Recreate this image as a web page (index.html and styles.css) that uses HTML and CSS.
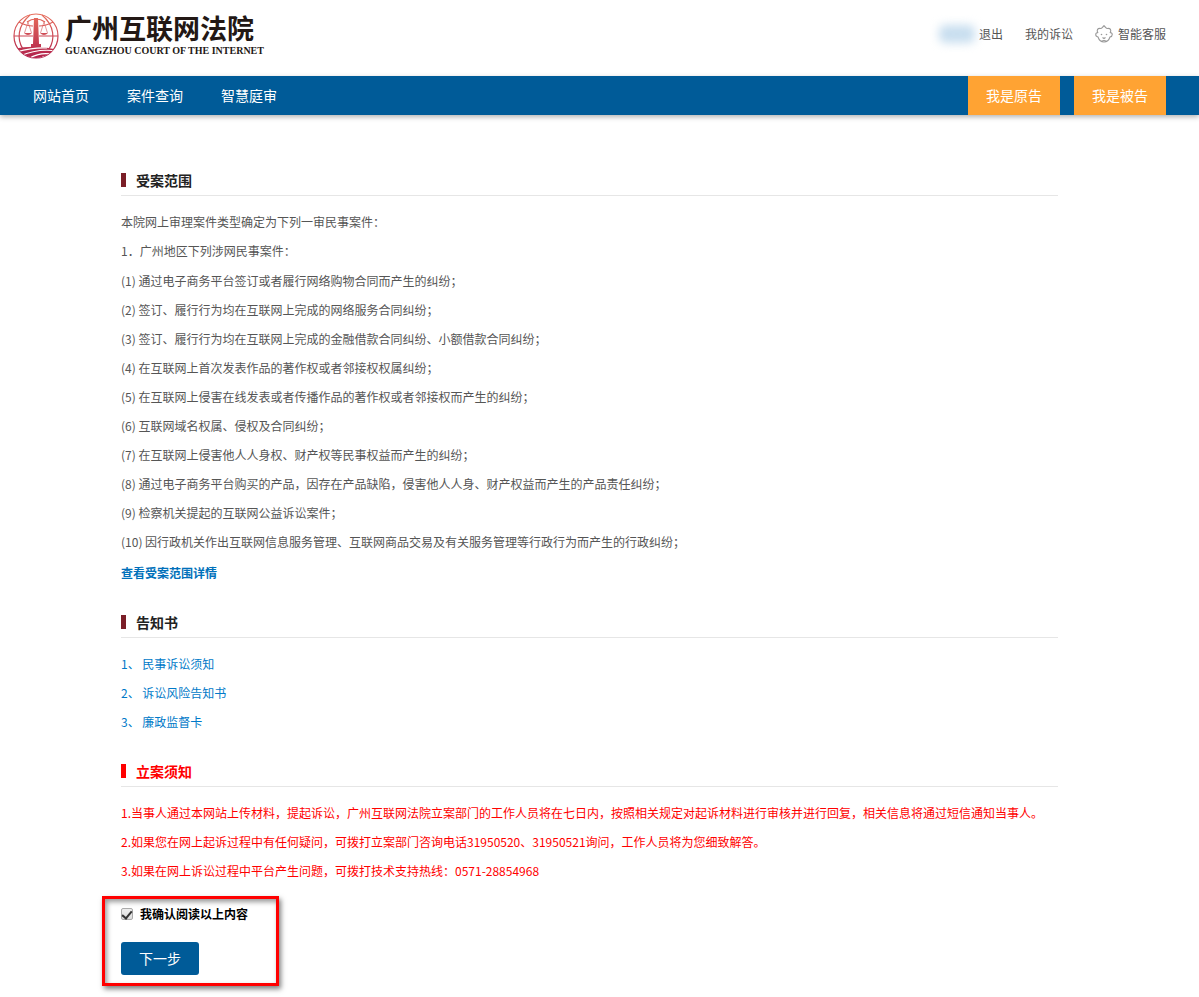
FILE: index.html
```
<!DOCTYPE html>
<html lang="zh-CN">
<head>
  <meta charset="UTF-8">
  <meta name="viewport" content="width=device-width, initial-scale=1.0">
  <title>广州互联网法院</title>
  <link rel="stylesheet" href="styles.css">
</head>
<body>
  <header class="header">
    <a class="logo" href="#">
      <svg class="logo-mark" viewBox="0 0 46 46" aria-hidden="true">
        <defs>
          <linearGradient id="red" x1="0" y1="0" x2="0" y2="46" gradientUnits="userSpaceOnUse">
            <stop offset="0" stop-color="#e8705c"/>
            <stop offset="1" stop-color="#b01f4b"/>
          </linearGradient>
          <clipPath id="globe"><circle cx="23" cy="23" r="22"/></clipPath>
        </defs>
        <g fill="none" stroke="url(#red)" stroke-width="1.2">
          <circle cx="23" cy="23" r="22"/>
          <path d="M17 2C4 13 4 27 10 36M29 2C42 13 42 27 36 36"/>
          <path d="M1 23H20M26 23H45M6 9Q13 13 20 13M40 9Q33 13 26 13"/>
          <path d="M14 9Q18 6 23 6Q28 6 32 9"/>
          <path d="M15 9L11.5 20M15 9L18.5 20M31 9L27.5 20M31 9L34.5 20" stroke-width=".6"/>
        </g>
        <g fill="url(#red)">
          <path d="M11 20H19Q15 24 11 20ZM27 20H35Q31 24 27 20Z"/>
          <path d="M21 5H25L26 31H28V35H18V31H20Z"/>
          <path clip-path="url(#globe)" d="M0 36Q22 31 46 37V46H0Z"/>
        </g>
        <g clip-path="url(#globe)" fill="none" stroke="#fff" stroke-width="1.1">
          <path d="M3 39Q22 34 34 35M7 43Q25 35 44 38M15 46Q28 38 42 42M26 46Q32 42 38 44"/>
        </g>
      </svg>
      <span class="logo-text">
        <span class="logo-cn">广州互联网法院</span>
        <span class="logo-en">GUANGZHOU COURT OF THE INTERNET</span>
      </span>
    </a>
    <div class="user-menu">
      <span class="user-name"></span>
      <a class="logout" href="#">退出</a>
      <a href="#">我的诉讼</a>
      <a class="service" href="#">
        <svg class="service-icon" viewBox="0 0 18 18" aria-hidden="true">
          <g fill="none" stroke="#999" stroke-width="1.1">
            <path d="M3 7.5C0 7.5 0 11.5 3 12C4 15 6 17 9 17S14 15 15 12C18 11.5 18 7.5 15 7.5"/>
            <path d="M3 8C1 5 3 3 5.5 3.5C7 3.5 7.5 2 9 .8C10.5 2 11 3.5 12.5 3.5C15 3 17 5 15 8"/>
            <path d="M7.5 12.500L9 13.500L10.500 12.500M6.500 16.500Q9 14.500 11.500 16.500"/>
          </g>
          <circle cx="6.5" cy="9.5" r=".8" fill="#999"/>
          <circle cx="11.5" cy="9.5" r=".8" fill="#999"/>
        </svg>
        智能客服
      </a>
    </div>
  </header>

  <nav class="nav">
    <div class="nav-links">
      <a href="#">网站首页</a>
      <a href="#">案件查询</a>
      <a href="#">智慧庭审</a>
    </div>
    <div class="nav-roles">
      <a href="#">我是原告</a>
      <a href="#">我是被告</a>
    </div>
  </nav>

  <main class="main">
    <section class="section">
      <h2 class="title">受案范围</h2>
      <p>本院网上审理案件类型确定为下列一审民事案件：</p>
      <p>1．广州地区下列涉网民事案件：</p>
      <ul class="scope">
        <li>(1) 通过电子商务平台签订或者履行网络购物合同而产生的纠纷；</li>
        <li>(2) 签订、履行行为均在互联网上完成的网络服务合同纠纷；</li>
        <li>(3) 签订、履行行为均在互联网上完成的金融借款合同纠纷、小额借款合同纠纷；</li>
        <li>(4) 在互联网上首次发表作品的著作权或者邻接权权属纠纷；</li>
        <li>(5) 在互联网上侵害在线发表或者传播作品的著作权或者邻接权而产生的纠纷；</li>
        <li>(6) 互联网域名权属、侵权及合同纠纷；</li>
        <li>(7) 在互联网上侵害他人人身权、财产权等民事权益而产生的纠纷；</li>
        <li>(8) 通过电子商务平台购买的产品，因存在产品缺陷，侵害他人人身、财产权益而产生的产品责任纠纷；</li>
        <li>(9) 检察机关提起的互联网公益诉讼案件；</li>
        <li>(10) 因行政机关作出互联网信息服务管理、互联网商品交易及有关服务管理等行政行为而产生的行政纠纷；</li>
      </ul>
      <a class="more" href="#">查看受案范围详情</a>
    </section>

    <section class="section">
      <h2 class="title">告知书</h2>
      <ul class="notices">
        <li><a href="#">1、 民事诉讼须知</a></li>
        <li><a href="#">2、 诉讼风险告知书</a></li>
        <li><a href="#">3、 廉政监督卡</a></li>
      </ul>
    </section>

    <section class="section warning">
      <h2 class="title">立案须知</h2>
      <p>1.当事人通过本网站上传材料，提起诉讼，广州互联网法院立案部门的工作人员将在七日内，按照相关规定对起诉材料进行审核并进行回复，相关信息将通过短信通知当事人。</p>
      <p>2.如果您在网上起诉过程中有任何疑问，可拨打立案部门咨询电话31950520、31950521询问，工作人员将为您细致解答。</p>
      <p>3.如果在网上诉讼过程中平台产生问题，可拨打技术支持热线：0571-28854968</p>
    </section>

    <form class="confirm">
      <label class="agree" for="agree">
        <input type="checkbox" id="agree" checked>
        我确认阅读以上内容
      </label>
      <button class="next" type="button">下一步</button>
    </form>
  </main>
</body>
</html>
```

FILE: styles.css
```
* {
  box-sizing: border-box;
}

body {
  margin: 0;
  background: #fff;
  color: #555;
  font-family: "Noto Sans CJK SC", sans-serif;
  font-size: 12px;
  line-height: 29px;
}

a {
  color: inherit;
  text-decoration: none;
}

p,
ul {
  margin: 0;
  padding: 0;
  list-style: none;
}

/* header */
.header {
  display: flex;
  justify-content: space-between;
  align-items: flex-start;
  height: 76px;
  padding: 13px 33px 0 13px;
}

.logo {
  display: flex;
  align-items: center;
  gap: 6px;
}

.logo-mark {
  width: 46px;
  height: 46px;
}

.logo-text {
  display: flex;
  flex-direction: column;
  color: #231815;
  font-weight: bold;
  white-space: nowrap;
}

.logo-cn {
  font-size: 27px;
  line-height: 30px;
}

.logo-en {
  font-family: "Liberation Serif", serif;
  font-size: 10px;
  line-height: 16px;
}

.user-menu {
  display: flex;
  align-items: center;
  gap: 22px;
  padding-top: 6px;
}

.user-name {
  width: 36px;
  height: 18px;
  margin-right: -18px;
  border-radius: 6px;
  background: #c8deef;
  filter: blur(5px);
}

.service {
  display: flex;
  align-items: center;
  gap: 5px;
}

.service-icon {
  width: 18px;
  height: 18px;
}

/* navigation */
.nav {
  display: flex;
  justify-content: space-between;
  padding: 0 33px;
  background: #005b98;
  box-shadow: 0 2px 5px rgba(0, 0, 0, 0.3);
  color: #fff;
  font-size: 14px;
  line-height: 39px;
}

.nav-links {
  display: flex;
  gap: 38px;
}

.nav-roles {
  display: flex;
  gap: 14px;
}

.nav-roles a {
  padding: 0 18px;
  background: #ffa333;
}

/* content */
.main {
  padding: 50px 141px 10px 121px;
}

.section {
  margin-bottom: 20px;
}

.title {
  display: flex;
  align-items: center;
  gap: 10px;
  margin: 0 0 11px;
  border-bottom: 1px solid #e6e6e6;
  color: #222;
  font-size: 14px;
  line-height: 30px;
}

.title::before {
  content: "";
  width: 5px;
  height: 14px;
  background: #7b1e28;
}

.scope {
  padding: 1px 0 2px;
}

.more {
  display: block;
  color: #0070ba;
  font-weight: bold;
}

.notices {
  color: #0079c8;
}

.warning {
  margin-bottom: 11px;
  color: #f00;
}

.warning .title {
  color: #f00;
}

.warning .title::before {
  background: #f00;
}

/* confirm box */
.confirm {
  display: flex;
  flex-direction: column;
  align-items: flex-start;
  gap: 14px;
  width: fit-content;
  margin-left: -19px;
  padding: 0 28px 8px 16px;
  border: 3px solid #f00;
  box-shadow: 2px 3px 5px rgba(0, 0, 0, 0.5), inset 2px 3px 5px rgba(0, 0, 0, 0.4);
}

.agree {
  display: flex;
  align-items: center;
  gap: 7px;
  color: #000;
  font-weight: bold;
}

.agree input {
  appearance: none;
  display: grid;
  place-items: center;
  width: 12px;
  height: 12px;
  margin: 0;
  border: 1px solid #aaa;
  border-radius: 2px;
  background: linear-gradient(#eee, #ddd);
}

.agree input:checked::before {
  content: "";
  width: 4px;
  height: 8px;
  border: solid #333;
  border-width: 0 2px 2px 0;
  transform: rotate(40deg);
}

.next {
  padding: 0 18px;
  border: 0;
  border-radius: 3px;
  background: #005b98;
  color: #fff;
  font-family: inherit;
  font-size: 14px;
  line-height: 33px;
  cursor: pointer;
}
```
